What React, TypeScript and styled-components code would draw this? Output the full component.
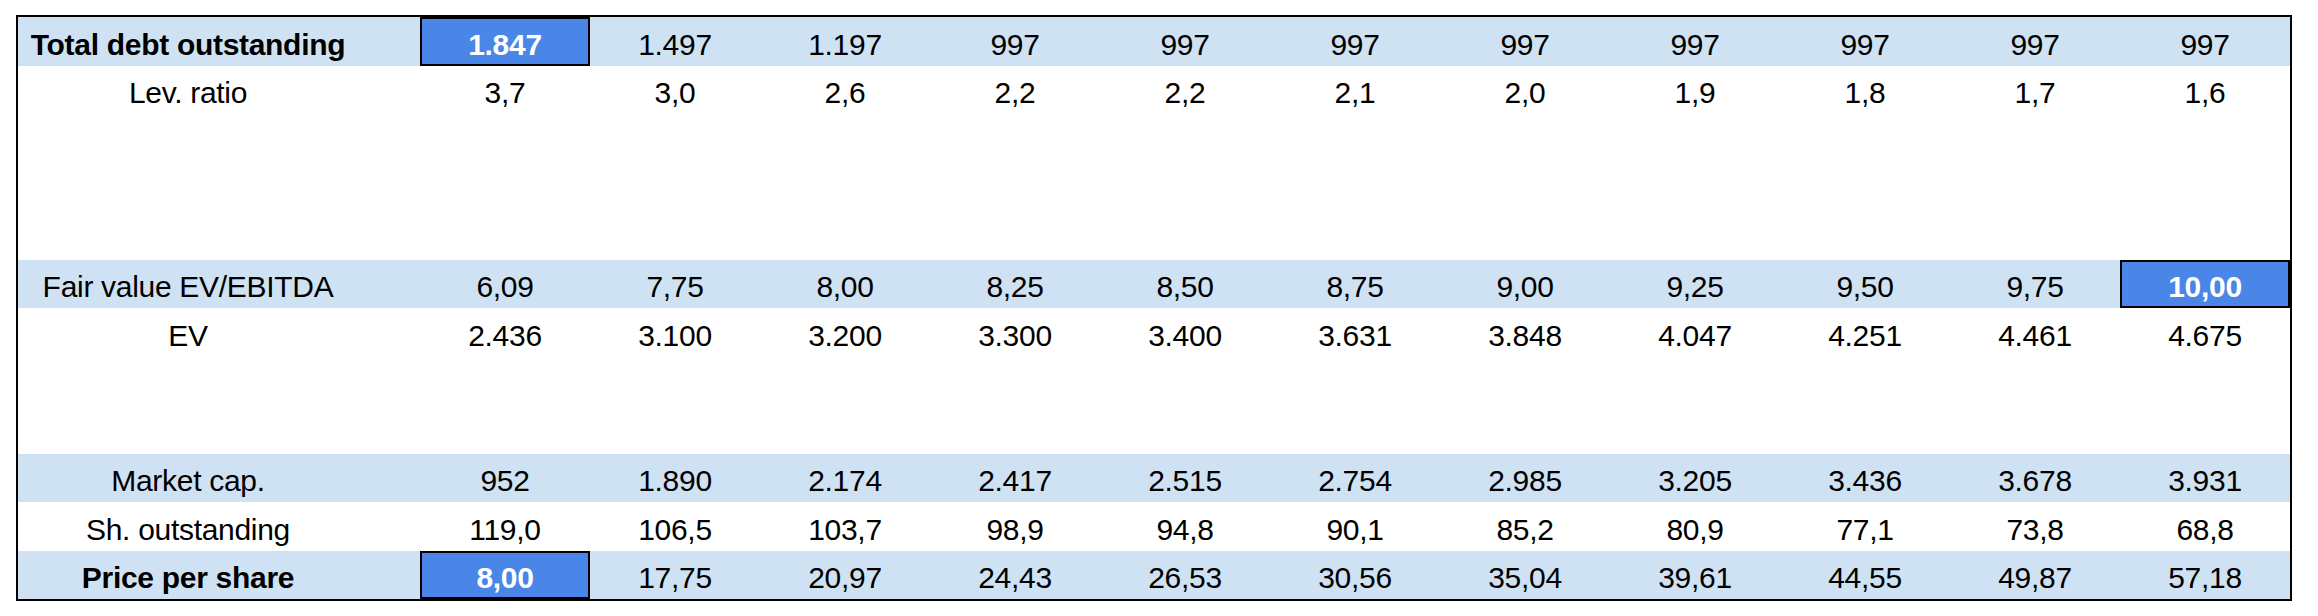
import React, { FC } from 'react';
import styled, { createGlobalStyle } from 'styled-components';

const GlobalStyle = createGlobalStyle`
  body {
    margin: 0;
    background: #ffffff;
    font-family: "Liberation Sans", Arial, sans-serif;
  }
`;

const Page = styled.div`
  padding: 15px 0 0 16px;
`;

const Sheet = styled.div`
  display: flex;
  flex-direction: column;
  width: 2272px;
  border: 2px solid #000;
`;

const Row = styled.div<{ $band?: boolean }>`
  display: grid;
  grid-template-columns: 340px 62px repeat(11, 170px);
  height: 48.5px;
  background-color: ${(p) => (p.$band ? '#cfe2f3' : '#ffffff')};
`;

const Label = styled.div<{ $bold?: boolean }>`
  display: flex;
  align-items: center;
  justify-content: center;
  padding-top: 7px;
  font-size: 30px;
  letter-spacing: -0.3px;
  font-weight: ${(p) => (p.$bold ? 700 : 400)};
  color: #000;
  white-space: nowrap;
`;

const Value = styled.div<{ $hl?: boolean }>`
  display: flex;
  align-items: center;
  justify-content: center;
  padding-top: 7px;
  font-size: 30px;
  letter-spacing: -0.3px;
  color: ${(p) => (p.$hl ? '#ffffff' : '#000')};
  font-weight: ${(p) => (p.$hl ? 700 : 400)};
  background-color: ${(p) => (p.$hl ? '#4a86e8' : 'transparent')};
  box-shadow: ${(p) => (p.$hl ? 'inset 0 0 0 2px #000' : 'none')};
`;

type Line = {
  label?: string;
  bold?: boolean;
  band?: boolean;
  values?: string[];
  hl?: number;
};

const lines: Line[] = [
  {
    label: 'Total debt outstanding',
    bold: true,
    band: true,
    hl: 0,
    values: ['1.847', '1.497', '1.197', '997', '997', '997', '997', '997', '997', '997', '997'],
  },
  {
    label: 'Lev. ratio',
    values: ['3,7', '3,0', '2,6', '2,2', '2,2', '2,1', '2,0', '1,9', '1,8', '1,7', '1,6'],
  },
  {},
  {},
  {},
  {
    label: 'Fair value EV/EBITDA',
    band: true,
    hl: 10,
    values: ['6,09', '7,75', '8,00', '8,25', '8,50', '8,75', '9,00', '9,25', '9,50', '9,75', '10,00'],
  },
  {
    label: 'EV',
    values: ['2.436', '3.100', '3.200', '3.300', '3.400', '3.631', '3.848', '4.047', '4.251', '4.461', '4.675'],
  },
  {},
  {},
  {
    label: 'Market cap.',
    band: true,
    values: ['952', '1.890', '2.174', '2.417', '2.515', '2.754', '2.985', '3.205', '3.436', '3.678', '3.931'],
  },
  {
    label: 'Sh. outstanding',
    values: ['119,0', '106,5', '103,7', '98,9', '94,8', '90,1', '85,2', '80,9', '77,1', '73,8', '68,8'],
  },
  {
    label: 'Price per share',
    bold: true,
    band: true,
    hl: 0,
    values: ['8,00', '17,75', '20,97', '24,43', '26,53', '30,56', '35,04', '39,61', '44,55', '49,87', '57,18'],
  },
];

const App: FC = () => {
  return (
    <>
      <GlobalStyle />
      <Page>
        <Sheet>
          {lines.map((line, i) => (
            <Row key={i} $band={line.band}>
              <Label $bold={line.bold}>{line.label}</Label>
              <div />
              {(line.values ?? Array(11).fill('')).map((v, j) => (
                <Value key={j} $hl={line.hl === j}>
                  {v}
                </Value>
              ))}
            </Row>
          ))}
        </Sheet>
      </Page>
    </>
  );
};

export default App;
